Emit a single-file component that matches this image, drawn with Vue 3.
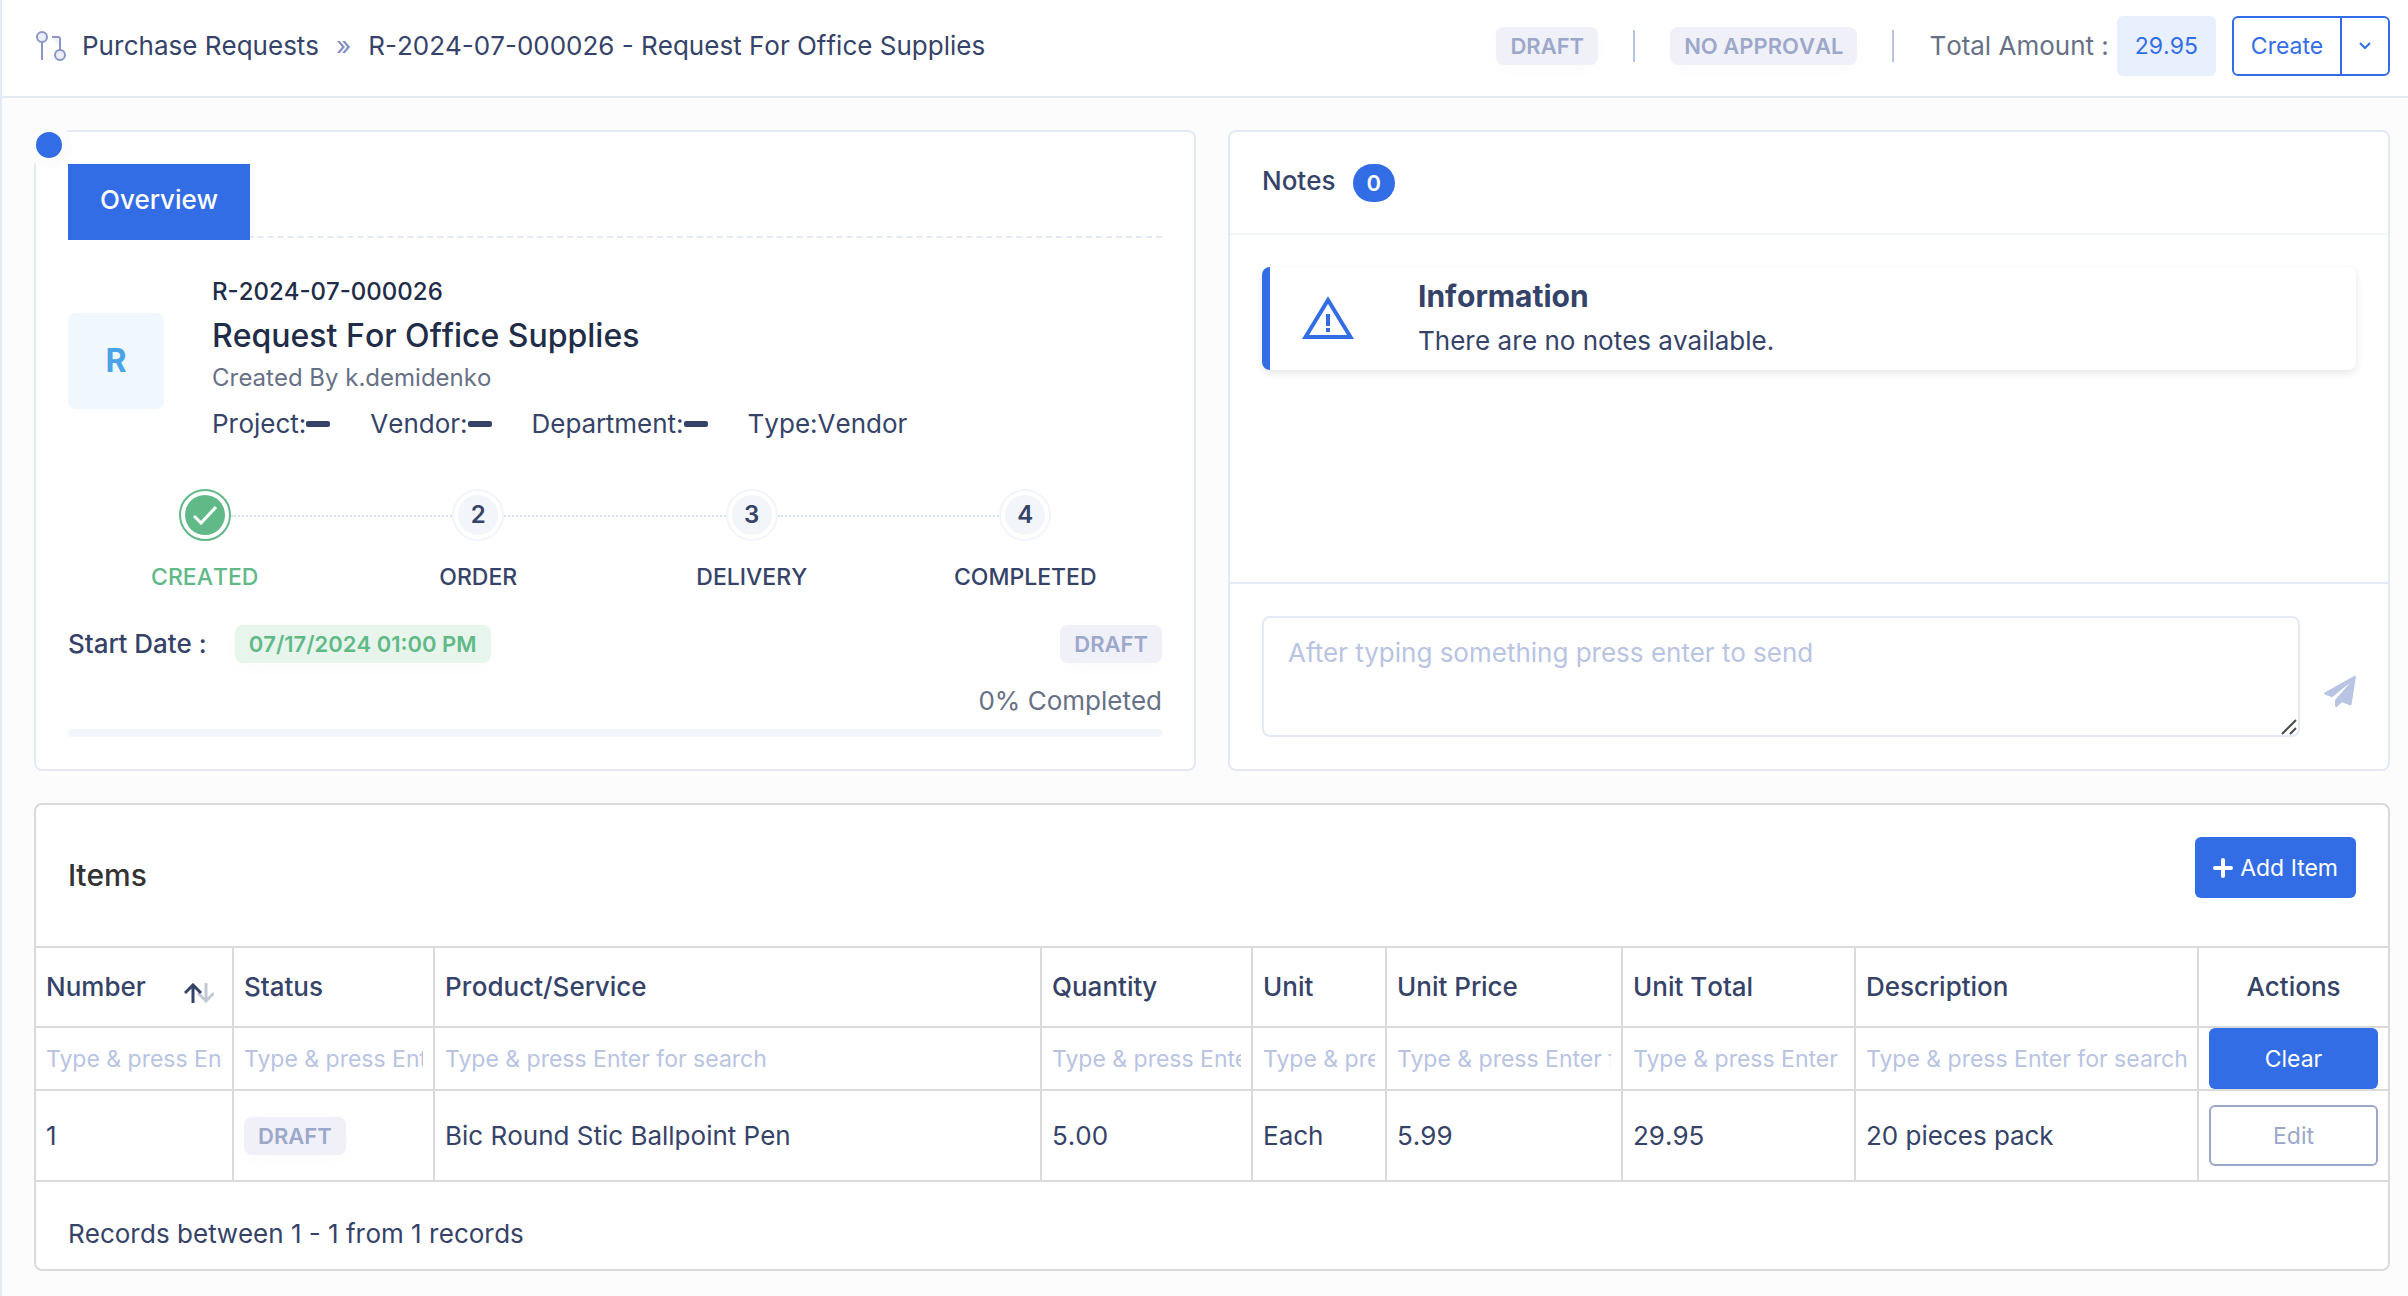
<script setup>
import { ref } from 'vue'

const note = ref('')

const meta = [
  { label: 'Project', value: '' },
  { label: 'Vendor', value: '' },
  { label: 'Department', value: '' },
  { label: 'Type', value: 'Vendor' },
]

const steps = [
  { label: 'CREATED', done: true },
  { label: 'ORDER' },
  { label: 'DELIVERY' },
  { label: 'COMPLETED' },
]

const columns = [
  { key: 'number', label: 'Number', sorted: true },
  { key: 'status', label: 'Status' },
  { key: 'product', label: 'Product/Service' },
  { key: 'quantity', label: 'Quantity' },
  { key: 'unit', label: 'Unit' },
  { key: 'price', label: 'Unit Price' },
  { key: 'total', label: 'Unit Total' },
  { key: 'description', label: 'Description' },
]

const rows = [
  {
    number: '1',
    status: 'DRAFT',
    product: 'Bic Round Stic Ballpoint Pen',
    quantity: '5.00',
    unit: 'Each',
    price: '5.99',
    total: '29.95',
    description: '20 pieces pack',
  },
]
</script>

<template>
  <div class="page">
    <header class="topbar">
      <nav class="crumbs" aria-label="Breadcrumb">
        <svg class="crumb-icon" width="30" height="30" viewBox="0 0 30 30" fill="none" stroke="#8a96c8" stroke-width="2" aria-hidden="true">
          <path d="M15 5h7l1 10z" fill="#eef1f8" stroke="none" />
          <circle cx="6" cy="6" r="5" fill="#eceff8" />
          <path d="M6 11v18" />
          <path d="M16 6h6q2 0 2 2v11" />
          <circle cx="24" cy="24" r="5" fill="#eceff8" />
        </svg>
        <a href="#requests">Purchase Requests</a>
        <span class="crumb-sep">»</span>
        <span>R-2024-07-000026 - Request For Office Supplies</span>
      </nav>
      <div class="topbar-right">
        <span class="badge">DRAFT</span>
        <span class="rule"></span>
        <span class="badge">NO APPROVAL</span>
        <span class="rule"></span>
        <span class="total-label">Total Amount :</span>
        <span class="total">29.95</span>
        <div class="split">
          <button type="button" class="split-main">Create</button>
          <button type="button" class="split-toggle" aria-label="More create options">
            <svg width="12" height="8" viewBox="0 0 12 8" fill="none" stroke="currentColor" stroke-width="2" aria-hidden="true">
              <path d="M1 1l5 5 5-5" />
            </svg>
          </button>
        </div>
      </div>
    </header>

    <main class="content">
      <div class="cards">
        <section class="card overview">
          <span class="dot"></span>
          <div class="tabs" role="tablist">
            <button type="button" class="tab" role="tab" aria-selected="true">Overview</button>
          </div>
          <div class="profile">
            <div class="avatar">R</div>
            <div class="profile-text">
              <div class="code">R-2024-07-000026</div>
              <h1>Request For Office Supplies</h1>
              <div class="author">Created By k.demidenko</div>
              <div class="meta">
                <span v-for="m in meta" :key="m.label" class="meta-item">
                  {{ m.label }}:<template v-if="m.value">{{ m.value }}</template><i v-else class="dash"></i>
                </span>
              </div>
            </div>
          </div>
          <ol class="steps">
            <li v-for="(s, i) in steps" :key="s.label" class="step" :class="{ done: s.done }">
              <span class="ring">
                <span class="disc">
                  <svg v-if="s.done" width="24" height="20" viewBox="0 0 24 20" fill="none" stroke="#fff" stroke-width="3" aria-hidden="true">
                    <path d="M1 11l7 7L23 2" />
                  </svg>
                  <template v-else>{{ i + 1 }}</template>
                </span>
              </span>
              <span class="step-label">{{ s.label }}</span>
            </li>
          </ol>
          <div class="dates">
            <span class="start-label">Start Date :</span>
            <span class="badge green">07/17/2024 01:00 PM</span>
            <span class="badge push">DRAFT</span>
          </div>
          <div class="percent">0% Completed</div>
          <div class="bar" role="progressbar" aria-valuenow="0" aria-valuemin="0" aria-valuemax="100" aria-label="Completed"></div>
        </section>

        <section class="card notes">
          <div class="notes-head">
            <h2>Notes</h2>
            <span class="count">0</span>
          </div>
          <div class="notes-body">
            <div class="alert">
              <svg class="alert-icon" width="52" height="46" viewBox="0 0 52 46" fill="none" stroke="#336de6" aria-hidden="true">
                <path d="M26 4L48.500 41H3.500z" stroke-width="4" />
                <path d="M26 18v12M26 32v4" stroke-width="4" />
              </svg>
              <div>
                <h3>Information</h3>
                <p>There are no notes available.</p>
              </div>
            </div>
          </div>
          <form class="composer" @submit.prevent>
            <div class="field">
              <textarea v-model="note" aria-label="Note" placeholder="After typing something press enter to send"></textarea>
              <svg class="grip" width="16" height="16" viewBox="0 0 16 16" stroke="#4a4a4a" stroke-width="2" aria-hidden="true">
                <path d="M1 15L15 1M9 15l6-6" />
              </svg>
            </div>
            <button type="submit" class="send" aria-label="Send">
              <svg width="32" height="33" viewBox="0 0 33 33" fill="#b8c4e2" aria-hidden="true">
                <path d="M31.500 .3c.7-.4 1.500.1 1.400 1l-4.500 28.500c-.1.900-.8 1.200-1.500.9L18.500 27.500l-5 4.800c-.8.700-2.100.300-2.100-.8v-6.200L27 7.500 8.200 22.500l-7.300-2.800c-1.100-.5-1.200-1.600-.2-2.200z" />
              </svg>
            </button>
          </form>
        </section>
      </div>

      <section class="items">
        <div class="items-head">
          <h2>Items</h2>
          <button type="button" class="btn primary">
            <svg width="20" height="20" viewBox="0 0 20 20" stroke="#fff" stroke-width="4" stroke-linecap="round" aria-hidden="true">
              <path d="M10 2v16M2 10h16" />
            </svg>
            Add Item
          </button>
        </div>
        <table>
          <colgroup>
            <col v-for="c in columns" :key="c.key" :class="'col-' + c.key" />
            <col class="col-actions" />
          </colgroup>
          <thead>
            <tr class="labels">
              <th v-for="c in columns" :key="c.key" scope="col">
                <span class="th">
                  {{ c.label }}
                  <svg v-if="c.sorted" class="sort" width="30" height="20" viewBox="0 0 30 20" fill="none" stroke-width="3" aria-hidden="true">
                    <path d="M22 0v18M14 10l8 8 8-8" stroke="#c2c8d6" />
                    <path d="M9 20V2M1 10l8-8 8 8" stroke="#364369" />
                  </svg>
                </span>
              </th>
              <th scope="col" class="actions">Actions</th>
            </tr>
            <tr class="filters">
              <td v-for="c in columns" :key="c.key">
                <input type="text" :aria-label="'Filter by ' + c.label" placeholder="Type &amp; press Enter for search" />
              </td>
              <td class="actions"><button type="button" class="btn primary wide">Clear</button></td>
            </tr>
          </thead>
          <tbody>
            <tr v-for="r in rows" :key="r.number">
              <td v-for="c in columns" :key="c.key">
                <span v-if="c.key === 'status'" class="badge">{{ r.status }}</span>
                <template v-else>{{ r[c.key] }}</template>
              </td>
              <td class="actions"><button type="button" class="btn outline wide">Edit</button></td>
            </tr>
          </tbody>
        </table>
        <div class="items-foot">Records between 1 - 1 from 1 records</div>
      </section>
    </main>
  </div>
</template>

<style>
body {
  margin: 0;
  background: #fcfcfc;
}
</style>

<style scoped>
*,
*::before {
  box-sizing: border-box;
}
.page {
  min-height: 100vh;
  border-left: 2px solid #e4e9f6;
  background: #fcfcfc;
  color: #364369;
  font-family: Inter, "Liberation Sans", sans-serif;
  font-size: 26px;
  font-kerning: none;
  line-height: 32px;
}
h1, h2, h3, p, ol {
  margin: 0;
  padding: 0;
  font-weight: 500;
}
button, input, textarea {
  font-family: inherit;
  margin: 0;
}
button {
  cursor: pointer;
}
svg {
  display: block;
  flex: none;
}
a {
  color: inherit;
  text-decoration: none;
}

.topbar {
  display: flex;
  align-items: center;
  justify-content: space-between;
  height: 98px;
  padding: 0 18px 4px 34px;
  border-bottom: 2px solid #e4e9f6;
  background: #fff;
}
.crumbs {
  display: flex;
  align-items: center;
}
.crumb-icon {
  margin-right: 16px;
}
.crumb-sep {
  margin: 0 17px;
  color: #7f8cc2;
}
.topbar-right {
  display: flex;
  align-items: center;
}
.badge {
  display: inline-block;
  padding: 0 14px;
  border-radius: 8px;
  background: #f0f1f8;
  box-shadow: 0 4px 20px rgba(60, 70, 110, 0.02);
  color: #9ca8ca;
  font-size: 22px;
  font-weight: 600;
  line-height: 38px;
  white-space: nowrap;
}
.badge.green {
  background: #e7f5ec;
  color: #61b988;
}
.rule {
  width: 2px;
  height: 32px;
  margin: 0 35px;
  background: #b8c4e2;
}
.total-label {
  color: #677186;
}
.total {
  margin: 0 16px 0 8px;
  padding: 0 18px;
  border-radius: 6px;
  background: #e8effd;
  color: #336de6;
  font-size: 23px;
  line-height: 60px;
}
.split {
  display: flex;
  height: 60px;
  border: 2px solid #336de6;
  border-radius: 6px;
}
.split button {
  display: flex;
  align-items: center;
  justify-content: center;
  padding: 0;
  border: 0;
  background: none;
  color: #336de6;
  font-size: 23px;
}
.split .split-main {
  width: 106px;
}
.split .split-toggle {
  width: 48px;
  border-left: 2px solid #336de6;
}

.content {
  padding: 32px 18px 24px 32px;
}
.cards {
  display: grid;
  grid-template-columns: 1fr 1fr;
  gap: 32px;
}
.card {
  border: 2px solid #e4e9f6;
  border-radius: 8px;
  background: #fff;
}
.overview {
  position: relative;
  padding: 32px;
}
.dot {
  position: absolute;
  top: -10px;
  left: -10px;
  width: 46px;
  height: 46px;
  border: 10px solid #fcfcfc;
  border-radius: 50%;
  background: #336de6;
}
.tabs {
  display: flex;
  border-bottom: 2px dashed #e4e9f6;
}
.tab {
  position: relative;
  height: 76px;
  margin-bottom: -4px;
  padding: 0 32px 6px;
  border: 0;
  background: #336de6;
  color: #fff;
  font-size: 26px;
  font-weight: 500;
}
.profile {
  display: flex;
  gap: 48px;
  margin-top: 36px;
}
.avatar {
  width: 96px;
  height: 96px;
  margin-top: 39px;
  border-radius: 8px;
  background: #f0f8fe;
  color: #4aa3e8;
  font-size: 32px;
  font-weight: 700;
  line-height: 96px;
  text-align: center;
}
.code {
  color: #212c48;
  font-size: 24px;
  font-weight: 500;
  line-height: 36px;
}
h1 {
  color: #212c48;
  font-size: 32px;
  line-height: 52px;
}
.author {
  color: #677186;
  font-size: 24px;
}
.meta {
  display: flex;
  gap: 40px;
  margin-top: 14px;
}
.meta-item {
  display: flex;
  align-items: center;
}
.dash {
  width: 24px;
  height: 6px;
  border-radius: 2px;
  background: #364369;
}
.steps {
  display: grid;
  grid-template-columns: repeat(4, 1fr);
  margin-top: 49px;
  list-style: none;
}
.step {
  position: relative;
  display: flex;
  flex-direction: column;
  align-items: center;
  gap: 20px;
}
.step + .step::before {
  content: "";
  position: absolute;
  top: 26px;
  right: calc(50% + 26px);
  width: calc(100% - 52px);
  border-top: 2px dotted #d8dff0;
}
.ring {
  width: 52px;
  height: 52px;
  padding: 4px;
  border: 2px solid #f2f5fa;
  border-radius: 50%;
}
.disc {
  display: flex;
  align-items: center;
  justify-content: center;
  height: 40px;
  border-radius: 50%;
  background: #f2f5fa;
  font-size: 24px;
  font-weight: 600;
}
.step-label {
  font-size: 23px;
  font-weight: 500;
}
.done .ring {
  border-color: #61b988;
}
.done .disc {
  background: #61b988;
}
.done .step-label {
  color: #61b988;
}
.dates {
  display: flex;
  align-items: center;
  gap: 28px;
  margin-top: 32px;
}
.start-label {
  font-weight: 500;
}
.push {
  margin-left: auto;
}
.percent {
  margin-top: 22px;
  color: #677186;
  text-align: right;
}
.bar {
  height: 8px;
  margin-top: 12px;
  border-radius: 4px;
  background: #f2f5fa;
}

.notes {
  display: flex;
  flex-direction: column;
}
.notes-head {
  display: flex;
  align-items: center;
  gap: 17px;
  height: 103px;
  padding: 0 32px;
  border-bottom: 2px solid #f2f5fa;
}
.notes-head h2 {
  padding-bottom: 4px;
  font-size: 26px;
}
.count {
  padding: 0 14px;
  border-radius: 20px;
  background: #336de6;
  color: #fff;
  font-size: 22px;
  font-weight: 600;
  line-height: 38px;
}
.notes-body {
  flex: 1;
  padding: 32px;
}
.alert {
  display: flex;
  align-items: center;
  height: 103px;
  padding-left: 32px;
  border-left: 8px solid #336de6;
  border-radius: 8px;
  box-shadow: 0 3px 8px rgba(0, 0, 0, 0.1);
}
.alert-icon {
  margin-right: 64px;
}
.alert h3 {
  font-size: 30px;
  font-weight: 700;
  line-height: 44px;
}
.alert p {
  font-weight: 400;
  line-height: 46px;
}
.composer {
  display: flex;
  align-items: center;
  gap: 24px;
  padding: 32px;
  border-top: 2px solid #e4e9f6;
}
.field {
  position: relative;
  display: flex;
  flex: 1;
}
textarea {
  flex: 1;
  height: 121px;
  padding: 19px 24px;
  border: 2px solid #e4e9f6;
  border-radius: 8px;
  background: #fff;
  color: inherit;
  font-size: 26px;
  line-height: 32px;
  resize: none;
}
.grip {
  position: absolute;
  right: 3px;
  bottom: 2px;
}
.send {
  margin-top: 30px;
  padding: 0;
  border: 0;
  background: none;
}
::placeholder {
  color: #b8c4e2;
  opacity: 1;
}

.items {
  margin-top: 32px;
  border: 2px solid #dadada;
  border-radius: 8px;
  background: #fff;
}
.items-head {
  display: flex;
  align-items: flex-start;
  justify-content: space-between;
  height: 141px;
  padding: 32px 32px 0;
}
.items-head h2 {
  margin-top: 22px;
  color: #333;
  font-size: 30px;
}
.btn {
  display: inline-flex;
  align-items: center;
  justify-content: center;
  gap: 7px;
  height: 61px;
  padding: 0 18px;
  border: 0;
  border-radius: 6px;
  font-size: 23px;
}
.primary {
  background: #336de6;
  color: #fff;
}
.outline {
  border: 2px solid #9ca8ca;
  background: #fff;
  color: #9ca8ca;
}
.wide {
  display: flex;
  width: 100%;
}
table {
  width: 100%;
  border-collapse: separate;
  border-spacing: 0;
  border-top: 2px solid #dadada;
  table-layout: fixed;
}
.col-number { width: 198px; }
.col-status { width: 201px; }
.col-quantity { width: 211px; }
.col-unit { width: 134px; }
.col-price { width: 236px; }
.col-total { width: 233px; }
.col-description { width: 343px; }
.col-actions { width: 189px; }
th, td {
  height: 91px;
  padding: 0 10px;
  border-right: 2px solid #dadada;
  border-bottom: 2px solid #dadada;
  text-align: left;
  vertical-align: middle;
}
.labels th {
  height: 80px;
  font-weight: 500;
}
.filters td {
  height: 63px;
}
th.actions, td.actions {
  border-right: 0;
  text-align: center;
}
.th {
  display: flex;
  align-items: center;
  justify-content: space-between;
}
.sort {
  margin: 12px 8px 0 0;
}
input {
  display: block;
  width: 100%;
  height: 60px;
  padding: 0;
  border: 0;
  background: none;
  color: inherit;
  font-size: 23px;
}
.items-foot {
  padding: 36px 32px 19px;
}
</style>
